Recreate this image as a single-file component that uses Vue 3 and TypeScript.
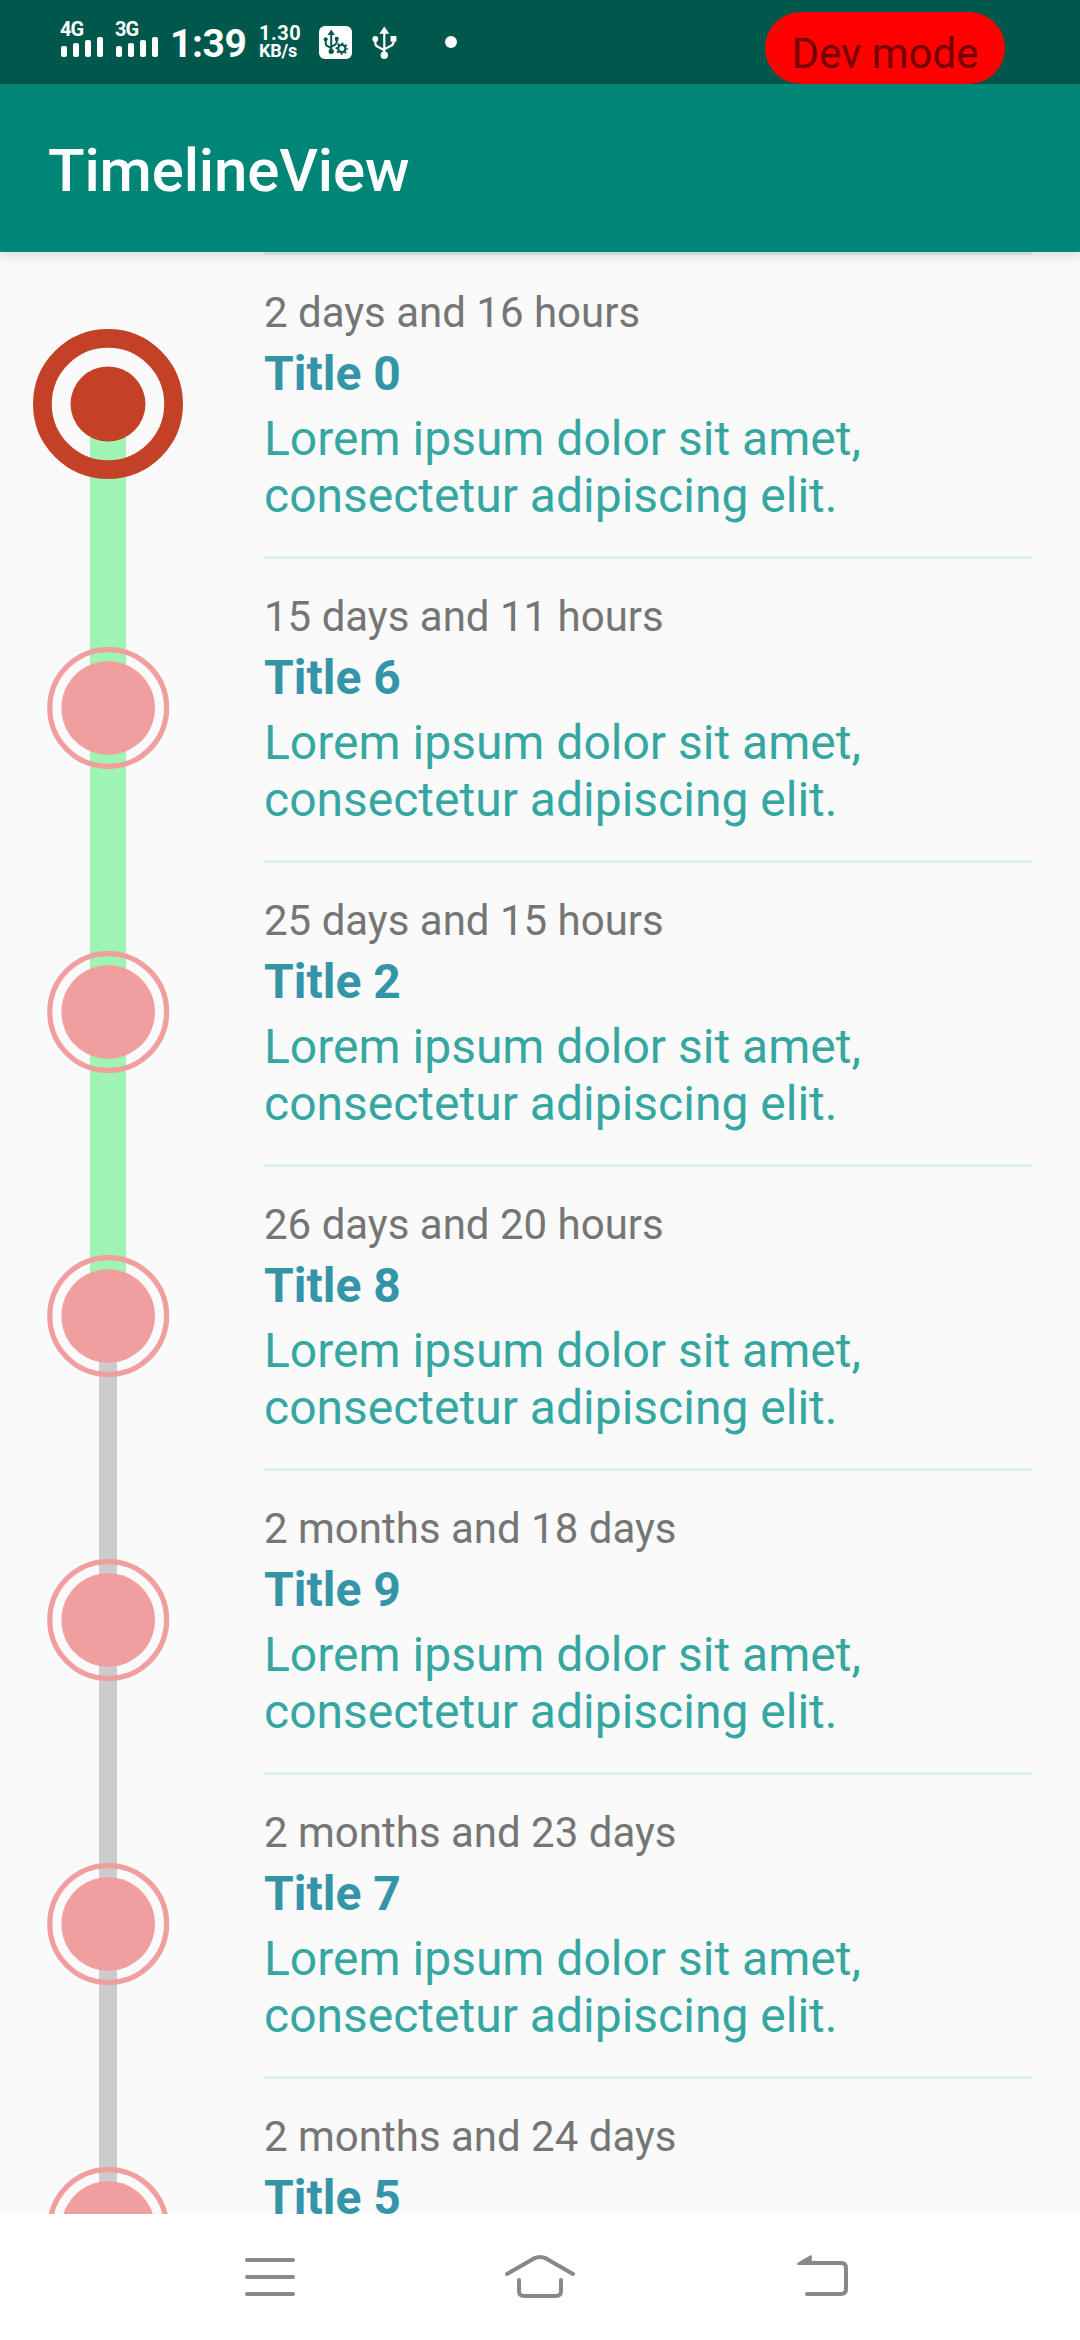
<script setup lang="ts">
interface TimelineItem {
  date: string
  title: string
  above: string
  below: string
}

const description = 'Lorem ipsum dolor sit amet, consectetur adipiscing elit.'

const items: TimelineItem[] = [
  { date: '2 days and 16 hours', title: 'Title 0', above: '', below: 'done' },
  { date: '15 days and 11 hours', title: 'Title 6', above: 'done', below: 'done' },
  { date: '25 days and 15 hours', title: 'Title 2', above: 'done', below: 'done' },
  { date: '26 days and 20 hours', title: 'Title 8', above: 'done', below: 'todo' },
  { date: '2 months and 18 days', title: 'Title 9', above: 'todo', below: 'todo' },
  { date: '2 months and 23 days', title: 'Title 7', above: 'todo', below: 'todo' },
  { date: '2 months and 24 days', title: 'Title 5', above: 'todo', below: 'todo' },
]

const networks: string[] = ['4G', '3G']
</script>

<template>
  <div class="screen">
    <header class="status-bar">
      <div v-for="net in networks" :key="net" class="signal">
        <span class="signal-label">{{ net }}</span>
        <svg class="signal-bars" width="43" height="21" viewBox="0 0 43 21">
          <rect x="1" y="10" width="6" height="11" rx="2" />
          <rect x="13" y="7" width="6" height="14" rx="2" />
          <rect x="25" y="4" width="6" height="17" rx="2" />
          <rect x="37" y="1" width="6" height="20" rx="2" />
        </svg>
      </div>
      <span class="clock">1:39</span>
      <div class="speed">
        <span class="speed-value">1.30</span>
        <span class="speed-unit">KB/s</span>
      </div>
      <svg class="usb-badge" width="33" height="33" viewBox="0 0 33 33">
        <rect width="33" height="33" rx="6" fill="#fff" />
        <g fill="none" stroke="#00574b" stroke-width="2">
          <path d="M12.2 7v18M6.7 13v4.5q0 2 2 2.7l3.5 2M17.7 13v3q0 2-2 3l-3.5 2" />
        </g>
        <g fill="#00574b">
          <path d="M12.2 3.5l3.6 5.5h-7.2z" />
          <circle cx="6.7" cy="13.2" r="2" />
          <rect x="15.9" y="11" width="3.6" height="3.6" />
          <circle cx="12.2" cy="25.3" r="2.6" />
        </g>
        <circle cx="22.8" cy="22.6" r="6.6" fill="#fff" />
        <circle cx="22.8" cy="22.6" r="3.6" fill="none" stroke="#00574b" stroke-width="2.2" />
        <circle
          cx="22.8"
          cy="22.6"
          r="5.2"
          fill="none"
          stroke="#00574b"
          stroke-width="2"
          stroke-dasharray="2.04 2.04"
          stroke-dashoffset="1.02"
        />
      </svg>
      <svg class="usb" width="25" height="33" viewBox="0 0 25 33">
        <path
          d="M12.3 6v23M3.3 13v4q0 3 3 4l6 3.2M21.5 13v3q0 3-3 4l-6.2 3.2"
          fill="none"
          stroke="#fff"
          stroke-width="2.2"
        />
        <g fill="#fff">
          <path d="M12.3 0.4l5 7.4H7.3z" />
          <circle cx="3.3" cy="13" r="2.9" />
          <rect x="18.6" y="10" width="5.8" height="5.6" />
          <circle cx="12.3" cy="29.2" r="3.7" />
        </g>
      </svg>
      <span class="dot"></span>
      <span class="dev-pill">Dev mode</span>
    </header>

    <div class="app-bar"><h1 class="app-title">TimelineView</h1></div>

    <main class="timeline">
      <article v-for="(item, index) in items" :key="item.title" class="row">
        <svg class="rail" width="216" height="304" viewBox="0 0 216 304">
          <rect v-if="item.above === 'done'" x="90" y="0" width="36" height="152" fill="#9ff3b3" />
          <rect v-if="item.above === 'todo'" x="99" y="0" width="18" height="152" fill="#ccc" />
          <rect v-if="item.below === 'done'" x="90" y="152" width="36" height="152" fill="#9ff3b3" />
          <rect v-if="item.below === 'todo'" x="99" y="152" width="18" height="152" fill="#ccc" />
          <g v-if="index === 0">
            <circle cx="108" cy="152" r="65.6" fill="none" stroke="#c34127" stroke-width="18.8" />
            <circle cx="108" cy="152" r="37.5" fill="#c34127" />
          </g>
          <g v-else>
            <circle cx="108.2" cy="152" r="58.4" fill="none" stroke="#f09e9e" stroke-width="5.2" />
            <circle cx="108.2" cy="152" r="46.8" fill="#f09e9e" />
          </g>
        </svg>
        <div class="content">
          <span class="date">{{ item.date }}</span>
          <h2 class="title">{{ item.title }}</h2>
          <p class="description">{{ description }}</p>
        </div>
      </article>
    </main>

    <nav class="nav-bar">
      <svg width="270" height="126" viewBox="136 2214 270 126">
        <path d="M248 2260h46M248 2277h46M248 2294h46" />
      </svg>
      <svg width="270" height="126" viewBox="406 2214 270 126">
        <path d="M508 2274l27-15.6q6-3 12 0L574 2274" />
        <path d="M520 2280v11q0 5 5 5h32q5 0 5-5v-11" />
      </svg>
      <svg width="270" height="126" viewBox="676 2214 270 126">
        <path d="M803 2263h39q5 0 5 5v21q0 5-5 5h-34" />
        <path class="arrow-head" d="M799.3 2263.5l12.5-7.3v7.8h-12.5z" />
      </svg>
    </nav>
  </div>
</template>

<style>
body {
  margin: 0;
  overflow: hidden;
}
</style>

<style scoped>
.screen {
  display: flex;
  flex-direction: column;
  width: 1080px;
  height: 2340px;
  overflow: hidden;
  background: #fafafa;
  font-family: Roboto, sans-serif;
}

.status-bar {
  display: flex;
  align-items: flex-start;
  flex: none;
  box-sizing: border-box;
  height: 84px;
  padding-left: 60px;
  background: #00574b;
  color: #fff;
}

.signal {
  display: flex;
  flex-direction: column;
  width: 43px;
  margin-right: 12px;
  padding-top: 18px;
}

.signal-label {
  height: 18px;
  font-size: 20px;
  font-weight: 700;
  line-height: 23px;
  letter-spacing: -1px;
}

.signal-bars {
  display: block;
  fill: #fff;
}

.clock {
  width: 89px;
  margin-top: 21px;
  font-size: 39px;
  font-weight: 700;
  line-height: 46px;
  letter-spacing: -0.4px;
}

.speed {
  display: flex;
  flex-direction: column;
  width: 60px;
  margin-top: 21px;
  font-weight: 700;
}

.speed-value {
  height: 19px;
  font-size: 20px;
  line-height: 24px;
  letter-spacing: 0.5px;
}

.speed-unit {
  font-size: 18px;
  line-height: 22px;
  letter-spacing: -0.2px;
}

.usb-badge {
  flex: none;
  margin-top: 26px;
}

.usb {
  flex: none;
  margin: 26px 0 0 20px;
}

.dot {
  flex: none;
  width: 12px;
  height: 12px;
  margin: 36px 0 0 48px;
  border-radius: 50%;
  background: #fff;
}

.dev-pill {
  box-sizing: border-box;
  width: 240px;
  height: 72px;
  margin: 12px 75px 0 auto;
  padding-top: 17px;
  border-radius: 36px;
  background: #f00;
  color: #750000;
  font-size: 42px;
  line-height: 49px;
  text-align: center;
}

.app-bar {
  display: flex;
  align-items: center;
  flex: none;
  box-sizing: border-box;
  height: 168px;
  padding: 5px 0 0 48px;
  background: #008577;
  box-shadow: 0 3px 12px rgba(0, 0, 0, 0.14);
  position: relative;
  z-index: 1;
}

.app-title {
  margin: 0;
  color: #fff;
  font-size: 60px;
  font-weight: 500;
  line-height: 70px;
  letter-spacing: -0.15px;
}

.timeline {
  flex: none;
  height: 1962px;
  overflow: hidden;
}

.row {
  display: flex;
  height: 304px;
}

.rail {
  display: block;
  flex: none;
  margin-right: 48px;
}

.content {
  box-sizing: border-box;
  width: 768px;
  height: 304px;
  padding-top: 33px;
  border-top: 3px solid #d8f0e8;
}

.date {
  display: block;
  color: #757575;
  font-size: 42px;
  line-height: 49px;
}

.title {
  margin: 8px 0 0;
  color: #3595a8;
  font-size: 48px;
  font-weight: 700;
  line-height: 57px;
}

.description {
  width: 700px;
  margin: 8px 0 0;
  color: #36a6a1;
  font-size: 48px;
  line-height: 57px;
}

.nav-bar {
  display: flex;
  justify-content: center;
  flex: none;
  height: 126px;
  background: #fff;
}

.nav-bar path {
  fill: none;
  stroke: #888;
  stroke-width: 4;
  stroke-linecap: round;
  stroke-linejoin: round;
}

.nav-bar .arrow-head {
  fill: #888;
  stroke-width: 2;
}
</style>
